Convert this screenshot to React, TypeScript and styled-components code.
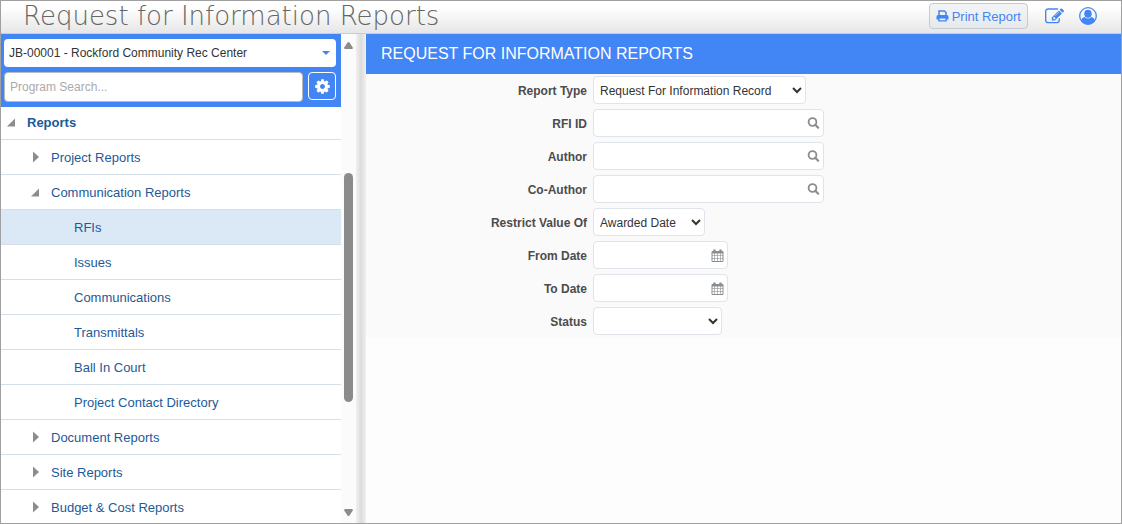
import React from "react";
import styled, { createGlobalStyle, css } from "styled-components";

const BLUE = "#4285f4";
const GREY = "#8a8d91";

const GlobalStyle = createGlobalStyle`
  *, *::before, *::after { box-sizing: border-box; }
  body { margin: 0; }
  body, button, input, select { font-family: "Liberation Sans", Arial, sans-serif; }
`;

const Shell = styled.div`
  display: flex;
  flex-direction: column;
  height: 100vh;
  border: 1px solid #a0a0a0;
  background: #fdfdfd;
  color: #333;
`;

const TopBar = styled.header`
  display: flex;
  align-items: center;
  flex: none;
  height: 33px;
  padding: 0 24px 2px 22px;
  border-bottom: 1px solid #ccc;
  background: linear-gradient(#fff 20%, #e6e6e6);
`;

const Title = styled.h1`
  flex: 1;
  margin: 0;
  font-family: "DejaVu Sans Light", "DejaVu Sans", sans-serif;
  font-size: 26px;
  font-weight: 200;
  line-height: 28px;
  white-space: nowrap;
  color: #666;
`;

const PrintButton = styled.button`
  display: flex;
  align-items: center;
  gap: 3px;
  height: 26px;
  padding: 0 6px;
  margin-right: 17px;
  border: 1px solid #c3cad2;
  border-radius: 4px;
  background: linear-gradient(#f3f4f5, #e6e9ec);
  color: ${BLUE};
  font-size: 13px;
`;

const IconButton = styled.button`
  display: flex;
  align-items: center;
  justify-content: center;
  padding: 0;
  border: 0;
  background: none;
  color: ${BLUE};
  & + & { margin-left: 15px; }
`;

const Body = styled.div`
  display: flex;
  flex: 1;
  min-height: 0;
`;

const Sidebar = styled.aside`
  flex: 0 0 340px;
  overflow: hidden;
  background: #fff;
`;

const SearchPanel = styled.div`
  display: flex;
  flex-direction: column;
  gap: 5px;
  padding: 5px 5px 5px 3px;
  background: ${BLUE};
`;

const JobPicker = styled.div`
  display: grid;
  align-items: center;
  & > * { grid-area: 1 / 1; }
  & > svg { justify-self: end; margin-right: 6px; pointer-events: none; }
`;

const JobSelect = styled.select`
  appearance: none;
  width: 100%;
  height: 28px;
  padding: 0 20px 0 5px;
  border: 0;
  border-radius: 4px;
  background: #fff;
  color: #333;
  font-size: 12px;
`;

const SearchRow = styled.div`
  display: flex;
  gap: 5px;
`;

const SearchInput = styled.input`
  flex: 1;
  min-width: 0;
  height: 30px;
  padding: 0 5px;
  border: 1px solid #bbb;
  border-radius: 4px;
  background: #fff;
  font-size: 12px;
  &::placeholder { color: #aaa; }
`;

const SettingsButton = styled.button`
  display: flex;
  align-items: center;
  justify-content: center;
  width: 28px;
  height: 28px;
  padding: 0;
  border: 1px solid #fff;
  border-radius: 4px;
  background: ${BLUE};
  color: #fff;
`;

const Tree = styled.nav`
  display: flex;
  flex-direction: column;
`;

type NodeProps = { $level: number; $active?: boolean };

const TreeLink = styled.a<NodeProps>`
  display: flex;
  align-items: center;
  gap: 11px;
  flex: none;
  height: 35px;
  padding-left: ${(p) => (p.$level === 2 ? 73 : 30)}px;
  border-bottom: 1px solid #d5dfe9;
  background: ${(p) => (p.$active ? "#dbe8f5" : "#fff")};
  color: #1c5a99;
  font-size: 13px;
  text-decoration: none;
  ${(p) =>
    p.$level === 0 &&
    css`
      height: 33px;
      padding: 0 0 2px 6px;
      font-weight: bold;
    `}
`;

const ScrollBar = styled.div`
  display: flex;
  flex-direction: column;
  align-items: center;
  flex: 0 0 15px;
  padding: 7px 0 6px;
  background: #fbfbfb;
  &::before { content: ""; flex: 124; }
  &::after { content: ""; flex: 107; order: 1; }
  & > svg:first-of-type { order: -1; }
  & > svg:last-of-type { order: 2; }
`;

const Thumb = styled.div`
  flex: 230;
  width: 9px;
  border-radius: 5px;
  background: #8b8b8b;
`;

const Splitter = styled.div`
  flex: 0 0 10px;
  background: linear-gradient(90deg, #f0f0f0, #dcdcdc 50%, #f0f0f0);
`;

const Main = styled.main`
  flex: 1;
  min-width: 0;
`;

const PanelTitle = styled.h2`
  margin: 0;
  padding: 0 15px 1px;
  background: ${BLUE};
  color: #fff;
  font-size: 16px;
  font-weight: normal;
  line-height: 39px;
`;

const Form = styled.form`
  display: flex;
  flex-direction: column;
  gap: 5px;
  padding: 2px 0 3px;
  background: #fafafa;
`;

const Row = styled.div`
  display: grid;
  grid-template-columns: 221px 1fr;
  column-gap: 6px;
  align-items: center;
`;

const Label = styled.label`
  padding-top: 1px;
  text-align: right;
  font-size: 12px;
  font-weight: bold;
  color: #4c4c4c;
`;

const Select = styled.select<{ $width: number }>`
  width: ${(p) => p.$width}px;
  height: 28px;
  padding: 1px 2px 0;
  border: 1px solid #dfe4ea;
  border-radius: 4px;
  background-color: #fff;
  color: #333;
  font-size: 12px;
`;

const Field = styled.div<{ $width: number }>`
  display: flex;
  align-items: center;
  width: ${(p) => p.$width}px;
  height: 28px;
  padding-right: 3px;
  border: 1px solid #dfe4ea;
  border-radius: 4px;
  background: #fff;
  & button { color: ${GREY}; }
`;

const FieldInput = styled.input`
  flex: 1;
  min-width: 0;
  padding: 0 6px;
  border: 0;
  outline: 0;
  background: none;
  font-size: 12px;
`;

const paths = {
  edit:
    "M888 1184l116-116-152-152-116 116v56h96v96h56zm440-720q-16-16-33 1l-350 350q-17 17-1 33t33-1l350-350q17-17 1-33zm80 594v190q0 119-84.5 203.5t-203.5 84.5h-832q-119 0-203.5-84.5t-84.5-203.5v-832q0-119 84.5-203.5t203.5-84.5h832q63 0 117 25 15 7 18 23 3 17-9 29l-49 49q-14 14-32 8-23-6-45-6h-832q-66 0-113 47t-47 113v832q0 66 47 113t113 47h832q66 0 113-47t47-113v-126q0-13 9-22l64-64q15-15 35-7t20 29zm-96-738l288 288-672 672h-288v-288zm444 132l-92 92-288-288 92-92q28-28 68-28t68 28l152 152q28 28 28 68t-28 68z",
  cog:
    "M1152 896q0-106-75-181t-181-75-181 75-75 181 75 181 181 75 181-75 75-181zm512-109v222q0 12-8 23t-20 13l-185 28q-19 54-39 91 35 50 107 138 10 12 10 25t-9 23q-27 37-99 108t-94 71q-12 0-26-9l-138-108q-44 23-91 38-16 136-29 186-7 28-36 28h-222q-14 0-24.5-8.5t-11.5-21.5l-28-184q-49-16-90-37l-141 107q-10 9-25 9-14 0-25-11-126-114-165-168-7-10-7-23 0-12 8-23 15-21 51-66.5t54-70.5q-27-50-41-99l-183-27q-13-2-21-12.5t-8-23.5v-222q0-12 8-23t19-13l186-28q14-46 39-92-40-57-107-138-10-12-10-24 0-10 9-23 26-36 98.5-107.5t94.5-71.5q13 0 26 10l138 107q44-23 91-38 16-136 29-186 7-28 36-28h222q14 0 24.5 8.5t11.5 21.5l28 184q49 16 90 37l142-107q9-9 24-9 13 0 25 10 129 119 165 170 7 8 7 22 0 12-8 23-15 21-51 66.5t-54 70.5q26 50 41 98l183 28q13 2 21 12.5t8 23.5z",
};

const Icon = ({ name, size }: { name: keyof typeof paths; size: number }) => (
  <svg width={size} height={size} viewBox="0 0 1792 1792" fill="currentColor" aria-hidden="true">
    <path d={paths[name]} />
  </svg>
);

const PrintIcon = () => (
  <svg width="13" height="12" viewBox="0 0 13 12" aria-hidden="true">
    <path d="M3 6V1H8.5L10 2.500V6" fill="none" stroke="currentColor" strokeWidth="1.500" />
    <path
      d="M2 5H11Q12.500 5 12.500 6.500V9.500H10.800V11.500H2.200V9.500H0.500V6.500Q0.500 5 2 5ZM3.600 8.500V10.200H9.400V8.500Z"
      fill="currentColor"
      fillRule="evenodd"
    />
  </svg>
);

const SearchIcon = () => (
  <svg width="13" height="14" viewBox="0 0 13 14" fill="none" stroke="currentColor" aria-hidden="true">
    <circle cx="5.500" cy="6" r="3.900" strokeWidth="1.800" />
    <path d="M8.300 8.800L11.200 11.700" strokeWidth="2.200" strokeLinecap="round" />
  </svg>
);

const CalendarIcon = () => (
  <svg width="13" height="13" viewBox="0 0 13 13" fill="none" stroke="currentColor" aria-hidden="true">
    <path d="M1 2.500H12V12.500H1Z" />
    <path d="M1 3.500H12" strokeWidth="2" />
    <path d="M3.500 0.500V3M9.500 0.500V3" strokeWidth="2.400" />
    <path d="M1 6.500H12M1 9.500H12M3.500 4V12.500M6.500 4V12.500M9.500 4V12.500" strokeOpacity="0.6" />
  </svg>
);

const UserIcon = () => (
  <svg width="18" height="18" viewBox="0 0 18 18" aria-hidden="true">
    <circle cx="9" cy="9" r="8.300" fill="none" stroke="currentColor" strokeWidth="1.300" />
    <ellipse cx="9" cy="6.800" rx="3.700" ry="4" fill="currentColor" />
    <path
      d="M2 13.500C2.600 11.300 4 10.300 5.600 9.900Q9 12.900 12.400 9.900C14 10.300 15.400 11.300 16 13.500A8.300 8.300 0 0 1 2 13.500Z"
      fill="currentColor"
    />
  </svg>
);

const Twisty = ({ open }: { open: boolean }) => (
  <svg width="9" height="12" viewBox="0 0 9 12" fill={GREY} aria-hidden="true">
    <path d={open ? "M8 2.500V10.500H0Z" : "M2 0.500L8 6L2 11.500Z"} />
  </svg>
);

type Item = { label: string; level: number; open?: boolean; active?: boolean };

const items: Item[] = [
  { label: "Reports", level: 0, open: true },
  { label: "Project Reports", level: 1, open: false },
  { label: "Communication Reports", level: 1, open: true },
  { label: "RFIs", level: 2, active: true },
  { label: "Issues", level: 2 },
  { label: "Communications", level: 2 },
  { label: "Transmittals", level: 2 },
  { label: "Ball In Court", level: 2 },
  { label: "Project Contact Directory", level: 2 },
  { label: "Document Reports", level: 1, open: false },
  { label: "Site Reports", level: 1, open: false },
  { label: "Budget & Cost Reports", level: 1, open: false },
];

type FieldDef = {
  id: string;
  label: string;
  kind: "select" | "search" | "calendar";
  width: number;
  value?: string;
};

const fields: FieldDef[] = [
  { id: "type", label: "Report Type", kind: "select", width: 213, value: "Request For Information Record" },
  { id: "rfi", label: "RFI ID", kind: "search", width: 231 },
  { id: "author", label: "Author", kind: "search", width: 231 },
  { id: "coauthor", label: "Co-Author", kind: "search", width: 231 },
  { id: "restrict", label: "Restrict Value Of", kind: "select", width: 112, value: "Awarded Date" },
  { id: "from", label: "From Date", kind: "calendar", width: 135 },
  { id: "to", label: "To Date", kind: "calendar", width: 135 },
  { id: "status", label: "Status", kind: "select", width: 129, value: "" },
];

export default function App() {
  return (
    <>
      <GlobalStyle />
      <Shell>
        <TopBar>
          <Title>Request for Information Reports</Title>
          <PrintButton type="button">
            <PrintIcon />
            Print Report
          </PrintButton>
          <IconButton type="button" aria-label="Edit">
            <Icon name="edit" size={19} />
          </IconButton>
          <IconButton type="button" aria-label="Account">
            <UserIcon />
          </IconButton>
        </TopBar>
        <Body>
          <Sidebar>
            <SearchPanel>
              <JobPicker>
                <JobSelect aria-label="Job">
                  <option>JB-00001 - Rockford Community Rec Center</option>
                </JobSelect>
                <svg width="8" height="4" viewBox="0 0 8 4" fill={BLUE} aria-hidden="true">
                  <path d="M0 0H8L4 4Z" />
                </svg>
              </JobPicker>
              <SearchRow>
                <SearchInput type="text" placeholder="Program Search..." aria-label="Program Search" />
                <SettingsButton type="button" aria-label="Settings">
                  <Icon name="cog" size={17} />
                </SettingsButton>
              </SearchRow>
            </SearchPanel>
            <Tree aria-label="Programs">
              {items.map((item) => (
                <TreeLink key={item.label} href="#" $level={item.level} $active={item.active}>
                  {item.open !== undefined && <Twisty open={item.open} />}
                  {item.label}
                </TreeLink>
              ))}
            </Tree>
          </Sidebar>
          <ScrollBar aria-hidden="true">
            <svg width="9" height="8" viewBox="0 0 9 8" fill="#8b8b8b">
              <path d="M3.500 1.500Q4.500 0.300 5.500 1.500L8.800 6.500Q9 8 8 8H1Q0 8 0.200 6.500Z" />
            </svg>
            <Thumb />
            <svg width="9" height="8" viewBox="0 0 9 8" fill="#8b8b8b">
              <path d="M3.500 6.500Q4.500 7.700 5.500 6.500L8.800 1.500Q9 0 8 0H1Q0 0 0.200 1.500Z" />
            </svg>
          </ScrollBar>
          <Splitter />
          <Main>
            <PanelTitle>REQUEST FOR INFORMATION REPORTS</PanelTitle>
            <Form>
              {fields.map((f) => (
                <Row key={f.id}>
                  <Label htmlFor={f.id}>{f.label}</Label>
                  {f.kind === "select" ? (
                    <Select id={f.id} $width={f.width}>
                      <option>{f.value}</option>
                    </Select>
                  ) : (
                    <Field $width={f.width}>
                      <FieldInput id={f.id} type="text" />
                      <IconButton type="button" aria-label={`${f.label} lookup`}>
                        {f.kind === "search" ? <SearchIcon /> : <CalendarIcon />}
                      </IconButton>
                    </Field>
                  )}
                </Row>
              ))}
            </Form>
          </Main>
        </Body>
      </Shell>
    </>
  );
}
